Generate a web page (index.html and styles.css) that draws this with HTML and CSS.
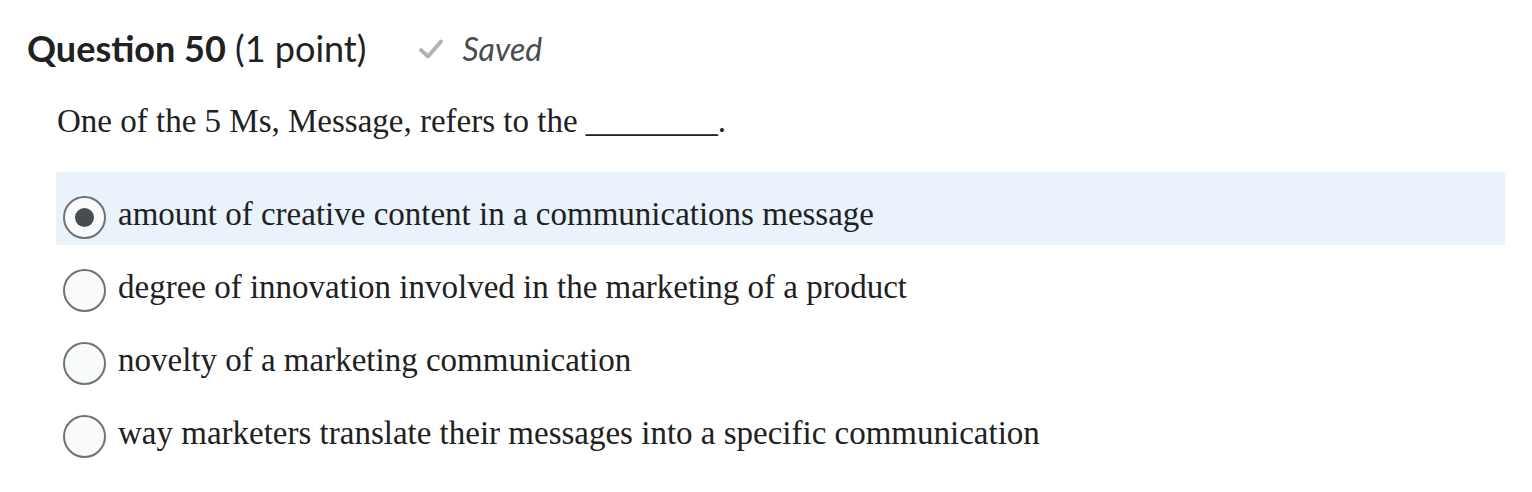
FILE: index.html
```html
<!DOCTYPE html>
<html>
<head>
<meta charset="utf-8">
<link rel="stylesheet" href="styles.css">
</head>
<body>
<div class="question">
  <div class="q-header">
    <h2 class="q-title"><strong>Question 50</strong> <span class="points">(1 point)</span></h2>
    <span class="saved">
      <svg class="check" width="26" height="22" viewBox="0 0 26 22"><path d="M3 12 L10 18.5 L23 3.5" fill="none" stroke="#aeb3b6" stroke-width="4" stroke-linecap="round" stroke-linejoin="round"/></svg>
      <em>Saved</em>
    </span>
  </div>
  <p class="q-text">One of the 5 Ms, Message, refers to the ________.</p>
  <div class="options">
    <label class="option selected"><span class="radio checked"></span><span class="opt-text">amount of creative content in a communications message</span></label>
    <label class="option"><span class="radio"></span><span class="opt-text">degree of innovation involved in the marketing of a product</span></label>
    <label class="option"><span class="radio"></span><span class="opt-text">novelty of a marketing communication</span></label>
    <label class="option"><span class="radio"></span><span class="opt-text">way marketers translate their messages into a specific communication</span></label>
  </div>
</div>
</body>
</html>
```
FILE: styles.css
```css
html, body {
  margin: 0;
  padding: 0;
  background: #ffffff;
}
.question {
  padding: 27px 27px 0 27px;
  width: 1478px;
}
.q-header {
  display: flex;
  align-items: center;
  height: 43px;
}
.q-title {
  margin: 0;
  font-family: Lato, "Liberation Sans", sans-serif;
  font-size: 36px;
  line-height: 43px;
  font-weight: 400;
  color: #202122;
}
.q-title strong {
  font-weight: 700;
}
.saved {
  display: flex;
  align-items: center;
  margin-left: 52px;
  font-family: Lato, "Liberation Sans", sans-serif;
  font-size: 32px;
  color: #494c4e;
}
.saved em {
  font-style: italic;
  margin-left: 18px;
}
.check {
  display: block;
}
.q-text {
  margin: 31px 0 0 30px;
  font-family: "Liberation Serif", "Times New Roman", serif;
  font-size: 33px;
  line-height: 40px;
  color: #202122;
}
.options {
  margin-top: 31px;
  margin-left: 29px;
  display: flex;
  flex-direction: column;
}
.option {
  box-sizing: border-box;
  display: flex;
  align-items: flex-start;
  height: 73px;
  padding: 22px 0 0 7px;
  font-family: "Liberation Serif", "Times New Roman", serif;
  font-size: 33px;
  line-height: 40px;
  color: #202122;
}
.option.selected {
  background: #eaf2fc;
}
.radio {
  box-sizing: border-box;
  width: 43px;
  height: 43px;
  margin-top: 2px;
  border: 2.5px solid #6e7376;
  border-radius: 50%;
  background: #f9fafc;
  flex: none;
  display: flex;
  align-items: center;
  justify-content: center;
  margin-right: 12px;
}
.radio.checked::after {
  content: "";
  width: 19px;
  height: 19px;
  border-radius: 50%;
  background: #494c4e;
}
```
